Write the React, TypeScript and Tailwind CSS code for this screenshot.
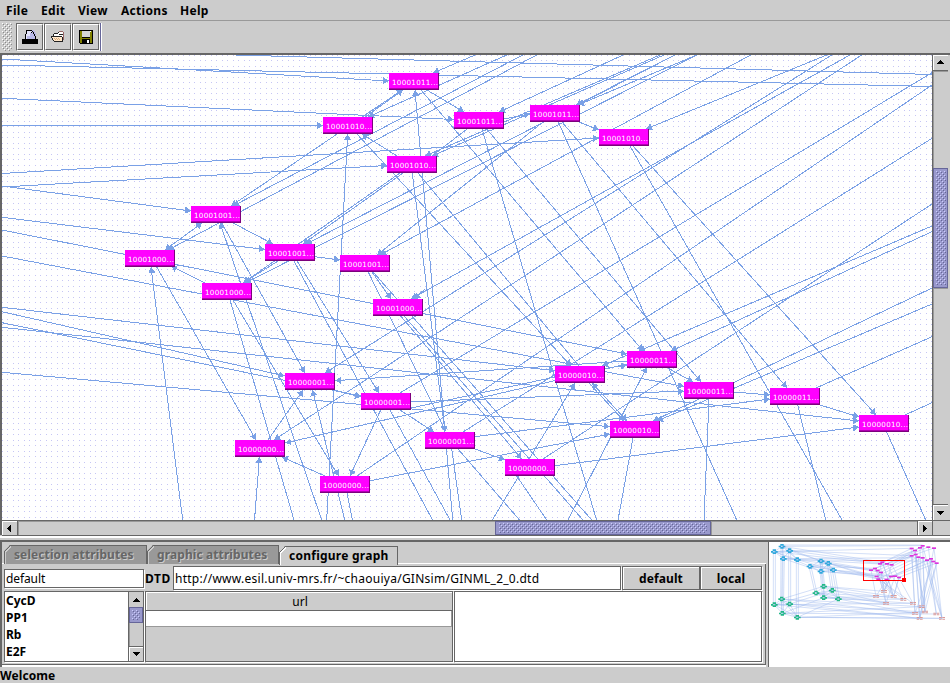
import React from "react";

const FONT = "font-['Noto_Sans','Open_Sans',sans-serif]";
const EDGE = "#7aa1e6";

type Edge = [number, number, number, number, (0 | 1 | 2)?];

// x, y, label prefix
const NODES: [number, number, string][] = [
  [389, 73, "10001011..."], [323, 117, "10001010..."], [454, 112, "10001011..."],
  [530, 105, "10001011..."], [599, 129, "10001010..."], [387, 156, "10001010..."],
  [191, 206, "10001001..."], [125, 250, "10001000..."], [265, 244, "10001001..."],
  [340, 255, "10001001..."], [202, 283, "10001000..."], [373, 299, "10001000..."],
  [285, 373, "10000001..."], [361, 393, "10000001..."], [555, 366, "10000010..."],
  [627, 351, "10000011..."], [684, 382, "10000011..."], [770, 388, "10000011..."],
  [859, 415, "10000010..."], [610, 421, "10000010..."], [425, 432, "10000001..."],
  [505, 459, "10000000..."], [235, 440, "10000000..."], [320, 476, "10000000..."],
];

// x1, y1, x2, y2, arrows: 0 none, 1 at the end, 2 at both ends
const EDGES: Edge[] = [
  [2, 59, 389, 81, 1], [2, 65, 932, 86.5], [235, 55, 932, 74.5], [2, 98.3, 454, 119.5, 1],
  [2, 125.5, 323, 125.5, 1], [2, 173.5, 599, 138, 1], [2, 187, 387, 165.5, 1], [2, 186, 191, 211, 1],
  [2, 217.3, 265, 249.5, 1], [2, 230, 627, 354, 1], [2, 256, 573, 364.5, 1], [2, 307.3, 555, 370.7, 1],
  [2, 311.7, 285, 376, 1], [2, 322.7, 361, 396, 1], [2, 327.3, 859, 421, 1], [2, 372.3, 610, 426.7, 1],
  [411, 402, 684, 391, 1], [605, 371.7, 684, 386.5, 1], [627, 361, 335, 380.7, 1], [627, 364, 285, 443, 1],
  [411, 408, 555, 377], [605, 368.5, 627, 365, 1], [627, 355, 602, 366, 1],
  [326.7, 520, 347.7, 134, 1], [452.7, 520, 415, 90, 1], [412.3, 173, 445, 432, 1], [451.7, 449, 461.7, 520],
  [427, 90, 464, 112, 1], [421, 90, 643, 351, 1], [482, 129, 596.5, 520], [486.7, 129, 701, 382, 1],
  [356, 133, 571, 366, 1], [418, 173, 579, 366], [558.3, 122, 736.7, 520], [562, 122, 787, 388, 1],
  [633, 146, 876, 415, 1], [630, 146, 842, 520],
  [368.3, 272, 445, 430], [372, 272, 391, 299, 1], [373, 272, 591.7, 520], [404, 316, 583, 520],
  [400.7, 316, 521.7, 459, 1], [516.7, 476, 546.7, 520], [458, 449, 519.5, 520],
  [294, 261, 432.5, 520], [297, 261, 379, 393, 1], [390, 410, 450, 520], [380.7, 410, 350, 476, 1],
  [400, 410, 434, 432, 1], [475, 449, 505, 460, 1], [344.7, 520, 312.5, 390, 1], [347, 493, 352.5, 520],
  [230, 300, 294, 520], [321.7, 520, 220, 223, 1], [233, 300, 338.5, 476, 1],
  [182.7, 520, 151, 267, 1], [156.7, 267, 256, 440, 1], [221.7, 223, 305, 373, 1],
  [202, 223, 165, 250, 2], [233, 223, 273, 244, 1], [205, 283, 171, 266, 1],
  [278, 261, 243, 283, 1], [506.7, 55, 368, 117, 1], [475, 55, 433, 73, 1],
  [522.7, 55, 233, 206, 1], [536.7, 55, 168, 250, 1], [402, 90, 231, 206, 1], [365, 117, 403, 90, 1],
  [623, 55, 499, 112, 1], [660, 55, 425, 156, 1], [664, 55, 432, 156, 1],
  [675, 55, 576, 105, 1], [675, 55, 306, 244, 1], [696.7, 55, 578, 105, 1], [696.7, 55, 245, 283, 1],
  [750.7, 55, 380, 255, 1], [543, 122, 377, 255, 1], [400, 173, 243, 283, 1], [403, 173, 303, 244, 1],
  [315, 256.7, 340, 260, 1], [397, 156, 362, 134, 1], [504, 119, 530, 114, 1], [579, 122, 599, 130, 1],
  [467, 129, 432, 156], [826.7, 55, 646, 129, 1],
  [831.7, 55, 325, 373, 1], [850, 55, 411, 299, 1], [861.7, 55, 503, 290], [503, 290, 274, 440, 1],
  [932, 72.7, 400, 393], [932, 85, 357, 476], [932, 138.3, 463, 432], [932, 204, 543, 459],
  [932, 226, 639, 351, 1], [932, 231.7, 671, 351, 1], [932, 288, 653, 421, 1], [932, 304, 657, 421, 1],
  [932, 336.7, 816, 388], [932, 402.7, 905, 415],
  [568, 520, 647, 367, 1], [633, 438, 618, 520], [668, 368, 693, 382, 1], [592, 383, 627, 421, 2],
  [589, 383, 624, 421, 1], [709, 399, 704, 520], [734, 392, 770, 395, 1], [820, 405, 859, 417, 1],
  [475, 436.7, 770, 399, 1], [370, 480.7, 610, 434, 1], [555, 465.7, 859, 427, 1],
  [886.7, 432, 925.7, 520], [797.7, 405, 825.7, 520], [254.5, 520, 259.5, 457, 1],
  [325, 476, 282, 457, 1], [268, 440, 303, 390, 1], [330, 389, 361, 397, 1],
  [492.3, 520, 575, 383, 1], [425, 289, 414, 299, 1],
];

function head(x1: number, y1: number, x2: number, y2: number) {
  const d = Math.hypot(x2 - x1, y2 - y1);
  const ux = (x2 - x1) / d;
  const uy = (y2 - y1) / d;
  const bx = x2 - ux * 6;
  const by = y2 - uy * 6;
  return `M${x2} ${y2}L${bx - uy * 3.6} ${by + ux * 3.6}L${bx + uy * 3.6} ${by - ux * 3.6}Z`;
}

function Diagram() {
  const lines = EDGES.map(([a, b, c, d]) => `M${a} ${b}L${c} ${d}`).join("");
  const heads = EDGES.filter((e) => e[4])
    .map(([a, b, c, d, k]) => head(a, b, c, d) + (k === 2 ? head(c, d, a, b) : ""))
    .join("");
  return (
    <svg className="block h-[465px] w-[930px] bg-white" viewBox="2 55 930 465" shapeRendering="crispEdges">
      <defs>
        <pattern id="grid" width="11" height="11" patternUnits="userSpaceOnUse">
          <path d="M2 0h1v1h-1zM7 0h1v1h-1zM2 5h1v1h-1zM7 5h1v1h-1z" fill="#c6c6f4" />
        </pattern>
      </defs>
      <rect x="2" y="55" width="930" height="465" fill="url(#grid)" />
      <path d={lines} stroke={EDGE} fill="none" />
      <path d={heads} fill={EDGE} />
      {NODES.map(([x, y, t]) => (
        <g key={`${x}-${y}`}>
          <rect x={x} y={y} width="50" height="17" fill="#7d007d" />
          <rect x={x} y={y} width="49" height="16" fill="#b200b2" />
          <rect x={x} y={y} width="49" height="15" fill="#ff00ff" />
          <text x={x + 3} y={y + 12} textLength="46" fontSize="7.2" fill="#fff" fontFamily="'DejaVu Sans', sans-serif">
            {t}
          </text>
        </g>
      ))}
    </svg>
  );
}

function Bumps({ id, className, dark = "#666699", light = "#ccccff" }: { id: string; className: string; dark?: string; light?: string }) {
  return (
    <svg className={`block ${className}`} shapeRendering="crispEdges">
      <defs>
        <pattern id={id} width="4" height="4" patternUnits="userSpaceOnUse">
          <path d="M0 0h1v1h-1zM2 2h1v1h-1z" fill={light} />
          <path d="M1 1h1v1h-1zM3 3h1v1h-1z" fill={dark} />
        </pattern>
      </defs>
      <rect width="100%" height="100%" fill={`url(#${id})`} />
    </svg>
  );
}

const ARROWS = {
  up: "M4 0h1v1h1v1h1v1h1v1h-7v-1h1v-1h1v-1h1z",
  down: "M1 0h7v1h-1v1h-1v1h-1v1h-1v-1h-1v-1h-1v-1h-1z",
  left: "M0 4h1v-1h1v-1h1v-1h1v7h-1v-1h-1v-1h-1v-1h-1z",
  right: "M0 1h1v1h1v1h1v1h1v1h-1v1h-1v1h-1v1h-1z",
};

function Arrow({ dir }: { dir: keyof typeof ARROWS }) {
  const horizontal = dir === "left" || dir === "right";
  return (
    <svg className={horizontal ? "h-[9px] w-[4px]" : "h-[4px] w-[9px]"} shapeRendering="crispEdges">
      <path d={ARROWS[dir]} />
    </svg>
  );
}

function ToolButton({ children }: { children: React.ReactNode }) {
  return (
    <div className="flex h-[28px] w-[28px] border border-white border-t-[#666] border-l-[#666]">
      <div className="flex flex-1 items-center justify-center border border-[#666] border-t-white border-l-white">{children}</div>
    </div>
  );
}

function Toolbar() {
  return (
    <div className="flex h-[32px] shrink-0 items-center pl-[2px]">
      <Bumps id="tb" className="mr-[4px] h-[28px] w-[10px]" dark="#8a8a8a" light="#ffffff" />
      <ToolButton>
        <svg className="h-[16px] w-[16px]" shapeRendering="crispEdges">
          <path d="M4 1h8v1h1v2h1v6H3V6h1z" fill="#b9b9e8" />
          <path d="M4 1h6v3H8v3H5v3H4z" fill="#e4e4fb" />
          <path d="M4 1h6v1H4zM4 2h1v3H4zM3 5h1v5H3zM10 2h1v1h-1zM11 3h1v2h-1zM12 5h1v2h-1zM9 3h1v1H9zM13 7h1v3h-1zM0 10h16v5H0z" fill="#000" />
        </svg>
      </ToolButton>
      <ToolButton>
        <svg className="h-[16px] w-[16px]" shapeRendering="crispEdges">
          <path d="M4 4h4l1-1h4v9H3z" fill="#fff" />
          <path d="M2 7h10v5H3z" fill="#ffe6c8" />
          <path d="M9 2h4v1H9zM13 3h1v8h-1z" fill="#996666" />
          <path d="M4 4h4v1H4zM8 3h1v1H8zM3 5h1v2H3zM1 7h11v1H1zM1 8h1v1H1zM2 9h1v2H2zM3 11h1v1H3zM4 12h9v1H4zM12 8h1v4h-1zM9 5h4v1H9z" fill="#222" />
          <path d="M4 9h1v1H4zM6 9h1v1H6zM8 9h1v1H8zM5 10h1v1H5zM7 10h1v1H7zM9 10h1v1H9z" fill="#d8a878" />
        </svg>
      </ToolButton>
      <ToolButton>
        <svg className="h-[16px] w-[16px]" shapeRendering="crispEdges">
          <path d="M1 1h14v14H2v-1H1z" fill="#000" />
          <path d="M2 2h2v7h8V2h2v12H2z" fill="#808000" />
          <path d="M4 2h8v6H4z" fill="#d4d4d4" />
          <path d="M4 10h8v5H4z" fill="#000" />
          <path d="M9 11h2v3H9z" fill="#fff" />
          <path d="M12 2h1v1h-1z" fill="#fff" />
        </svg>
      </ToolButton>
      <div className="h-[28px] w-[2px] border-r border-white bg-[#666699]" />
    </div>
  );
}

function VScroll() {
  return (
    <div className="flex h-[466px] w-[16px] flex-col border-l border-[#666] bg-[#ccc]">
      <div className="flex h-[16px] items-center justify-center border-b border-[#666] pb-[1px] shadow-[inset_1px_1px_0_#fff]"><Arrow dir="up" /></div>
      <div className="h-[97px] border-t border-l border-[#999]" />
      <div className="h-[120px] border border-[#666699] bg-[#9999cc] p-[2px]"><Bumps id="vs" className="h-[114px] w-[10px]" /></div>
      <div className="h-[216px] border-t border-l border-[#999]" />
      <div className="flex h-[17px] items-center justify-center border-y border-[#666] shadow-[inset_1px_1px_0_#fff]"><Arrow dir="down" /></div>
    </div>
  );
}

function HScroll() {
  return (
    <div className="flex h-[16px] w-full border-y border-[#666] bg-[#ccc]">
      <div className="flex w-[16px] items-center justify-center border-r border-[#666] pr-[2px] shadow-[inset_1px_1px_0_#fff]"><Arrow dir="left" /></div>
      <div className="w-[477px] border-t border-l border-[#999]" />
      <div className="w-[216px] border border-[#666699] bg-[#9999cc] px-[3px] py-[1px]"><Bumps id="hs" className="h-[10px] w-[208px]" /></div>
      <div className="w-[206px] border-t border-l border-[#999]" />
      <div className="flex w-[16px] items-center justify-center border-x border-[#666] shadow-[inset_1px_1px_0_#fff]"><Arrow dir="right" /></div>
      <div className="flex-1" />
    </div>
  );
}

const BLUE = [[28, 44], [51, 28], [74, 41], [55, 65], [97, 68], [135, 88], [168, 72], [190, 79], [168, 103], [205, 99]];
const GREEN = [[28, 203], [50, 186], [74, 201], [52, 229], [97, 241], [153, 168], [176, 148], [202, 160], [176, 182], [220, 186]];
const PINK = [[440, 34], [450, 40], [465, 32], [473, 26], [490, 30], [507, 33], [440, 56], [452, 52], [460, 60], [473, 62], [486, 69], [498, 65], [505, 73], [515, 78], [345, 80], [352, 75], [366, 80], [380, 83], [318, 99], [330, 94], [338, 100], [348, 106], [335, 118], [340, 126], [365, 127], [378, 118], [390, 117], [402, 121]];
const ROSE = [[333, 178], [357, 163], [363, 199], [386, 178], [415, 187], [444, 199], [450, 229], [464, 244], [470, 209], [480, 225], [514, 231], [531, 244]];

function MiniMap() {
  let dense = "";
  const line = (p: number[], q: number[], s = 0) => {
    dense += `M${p[0] + s} ${p[1]}L${q[0] + s} ${q[1]}`;
  };
  BLUE.forEach((p, i) => {
    const half = i < 5 ? 0 : 5;
    line(p, GREEN[i], -3);
    line(p, GREEN[i], 3);
    line(p, BLUE[half + ((i + 1) % 5)]);
    line(p, BLUE[half + ((i + 2) % 5)]);
    line(GREEN[i], GREEN[half + ((i + 1) % 5)]);
    line(GREEN[i], GREEN[half + ((i + 2) % 5)]);
    if (i < 5) {
      line(p, BLUE[i + 5]);
      line(p, PINK[i * 3]);
      line(p, PINK[i + 14]);
      line(GREEN[i], GREEN[i + 5]);
      line(GREEN[i], ROSE[i + 7]);
      line(GREEN[i], ROSE[i + 5]);
    } else {
      line(p, PINK[i + 14]);
      line(p, PINK[i + 17]);
      line(GREEN[i], ROSE[i - 5]);
      line(GREEN[i], ROSE[i - 3]);
    }
  });
  PINK.forEach((p, i) => {
    if (i < 14) {
      line(p, ROSE[6 + (i % 6)]);
      if (i % 2) line(p, ROSE[6 + ((i + 2) % 6)]);
      line(p, PINK[14 + i]);
    } else {
      line(p, ROSE[i % 6]);
      if (i % 2) line(p, ROSE[i % 4]);
    }
  });
  const diamond = (c: string) => ([x, y]: number[]) => (
    <path key={`${x}-${y}`} fill={c} d={`M${x - 10} ${y - 2}h7v5h-7zM${x + 3} ${y - 2}h7v5h-7zM${x - 5} ${y - 7}h10v5h-10zM${x - 5} ${y + 2}h10v5h-10z`} />
  );
  return (
    <svg className="block h-[125px] w-[181px] bg-white" viewBox="12 15 543 375">
      <path d={dense + "M51 24L473 24M97 241L531 244"} stroke="#9db8ee" strokeWidth="3" fill="none" opacity="0.45" />
      {BLUE.map(diamond("#2fa8dc"))}
      {GREEN.map(diamond("#22b888"))}
      {PINK.map(([x, y]) => <rect key={`${x}-${y}`} x={x - 6} y={y - 2} width="12" height="5" fill="#dd33dd" />)}
      {ROSE.map(([x, y]) => (
        <path key={`${x}-${y}`} fill="#d99a9a" d={`M${x - 9} ${y - 4}h8v3h-8zM${x + 1} ${y - 4}h8v3h-8zM${x - 9} ${y + 1}h8v3h-8zM${x + 1} ${y + 1}h8v3h-8z`} />
      ))}
      <rect x="295.5" y="70.5" width="123" height="60" stroke="#f00" strokeWidth="3" fill="none" />
      <rect x="411" y="123" width="12" height="12" fill="#f00" />
    </svg>
  );
}

function Tab({ label, width, active = false }: { label: string; width: string; active?: boolean }) {
  return (
    <div className={`relative h-[19px] ${width} border-t border-r border-[#666] ${active ? "bg-[#ccc] text-black" : "bg-[#999] text-[#666] [text-shadow:1px_1px_0_#ccc]"} [clip-path:polygon(0_6px,6px_0,100%_0,100%_100%,0_100%)]`}>
      <svg className="absolute top-[-1px] left-0 h-[19px] w-[8px]" shapeRendering="crispEdges">
        <path d="M0.5 19V6.5L6.5 0.5" stroke="#666" fill="none" />
        <path d="M1.5 19V7L7 1.5" stroke={active ? "#fff" : "#ccc"} fill="none" />
      </svg>
      <span className="block whitespace-pre pl-[10px] text-[12px] leading-[18px] font-bold">{label}</span>
    </div>
  );
}

function BottomPanel() {
  return (
    <div className="flex h-[127px] shrink-0 border-t-2 border-[#666]">
      <div className="flex w-[766px] flex-col border-l-2 border-[#666]">
        <div className="flex h-[22px] items-end pl-[2px] shadow-[inset_0_-1px_0_#fff]">
          <Tab label="selection attributes" width="w-[143px] tracking-[0.1px]" />
          <Tab label="graphic attributes" width="w-[132px] tracking-[0.1px]" />
          <Tab label="configure graph" width="w-[119px] tracking-[0.25px] top-[1px]" active />
        </div>
        <div className="flex h-[101px] flex-col border-r border-b border-[#666] pt-[2px] pl-[2px]">
          <div className="flex h-[24px] items-center">
            <div className="h-[19px] w-[140px] border border-[#666] bg-white pl-[1px] text-[12px] leading-[18px] tracking-[-0.1px] shadow-[1px_1px_0_#fff]">default</div>
            <div className="w-[29px] pt-[2px] pl-[1px] text-[12px] font-bold tracking-[0.6px]">DTD</div>
            <div className="h-[24px] w-[448px] whitespace-pre border border-[#666] bg-white pl-[1px] text-[12px] leading-[24px] tracking-[0.26px] shadow-[1px_1px_0_#fff]">http://www.esil.univ-mrs.fr/~chaouiya/GINsim/GINML_2_0.dtd</div>
            <div className="ml-[1px] h-[24px] w-[78px] border border-[#666] text-center text-[12px] leading-[24px] font-bold tracking-[0.1px] shadow-[inset_1px_1px_0_#fff,1px_1px_0_#fff]">default</div>
            <div className="h-[24px] w-[62px] border border-[#666] text-center text-[12px] leading-[24px] font-bold tracking-[0.1px] shadow-[inset_1px_1px_0_#fff,1px_1px_0_#fff]">local</div>
          </div>
          <div className="mt-[1px] flex h-[71px]">
            <div className="flex w-[140px] border border-[#666] bg-white shadow-[1px_1px_0_#fff]">
              <div className="flex-1 pl-[1px] text-[12px] leading-[17px] font-bold">
                <div>CycD</div><div>PP1</div><div>Rb</div><div>E2F</div>
              </div>
              <div className="flex w-[15px] flex-col border-l border-[#666] bg-[#ccc]">
                <div className="flex h-[15px] items-center justify-center"><Arrow dir="up" /></div>
                <div className="h-[16px] border border-[#666699] bg-[#9999cc] p-[2px]"><Bumps id="ls" className="h-[10px] w-[8px]" /></div>
                <div className="h-[23px] border-l border-[#999]" />
                <div className="flex flex-1 items-center justify-center border-t border-[#666] shadow-[inset_1px_1px_0_#fff]"><Arrow dir="down" /></div>
              </div>
            </div>
            <div className="ml-[1px] w-[308px] border border-[#666] bg-[#ccc] shadow-[1px_1px_0_#fff]">
              <div className="h-[19px] border-b border-[#666] pl-[2px] text-center text-[12px] leading-[20px] shadow-[inset_1px_1px_0_#fff]">url</div>
              <div className="h-[16px] border-r border-b border-[#999] bg-white" />
            </div>
            <div className="ml-[1px] w-[308px] border border-[#666] bg-white shadow-[1px_1px_0_#fff]" />
          </div>
        </div>
        <div className="h-[2px] bg-white" />
      </div>
      <div className="ml-[2px] border-l border-[#666]"><MiniMap /></div>
    </div>
  );
}

export default function App() {
  return (
    <div className={`flex h-[683px] w-[950px] flex-col overflow-hidden bg-[#ccc] text-black ${FONT}`}>
      <div className="flex h-[21px] shrink-0 items-center border-b border-[#999] pt-[2px] pl-[6px] text-[12px] font-bold tracking-[0.3px]">
        <span className="w-[35px]">File</span>
        <span className="w-[37px]">Edit</span>
        <span className="w-[43px]">View</span>
        <span className="w-[59px]">Actions</span>
        <span>Help</span>
      </div>
      <Toolbar />
      <div className="h-[482px] shrink-0 border-t-2 border-l-2 border-[#666]">
        <div className="flex h-[465px]">
          <Diagram />
          <VScroll />
        </div>
        <HScroll />
      </div>
      <div className="mt-[1px] h-[2px] shrink-0 bg-white" />
      <div className="h-[2px] shrink-0" />
      <BottomPanel />
      <div className="flex-1 pt-[1px] text-[12px] leading-[15px] font-bold tracking-[0.1px]">Welcome</div>
    </div>
  );
}
